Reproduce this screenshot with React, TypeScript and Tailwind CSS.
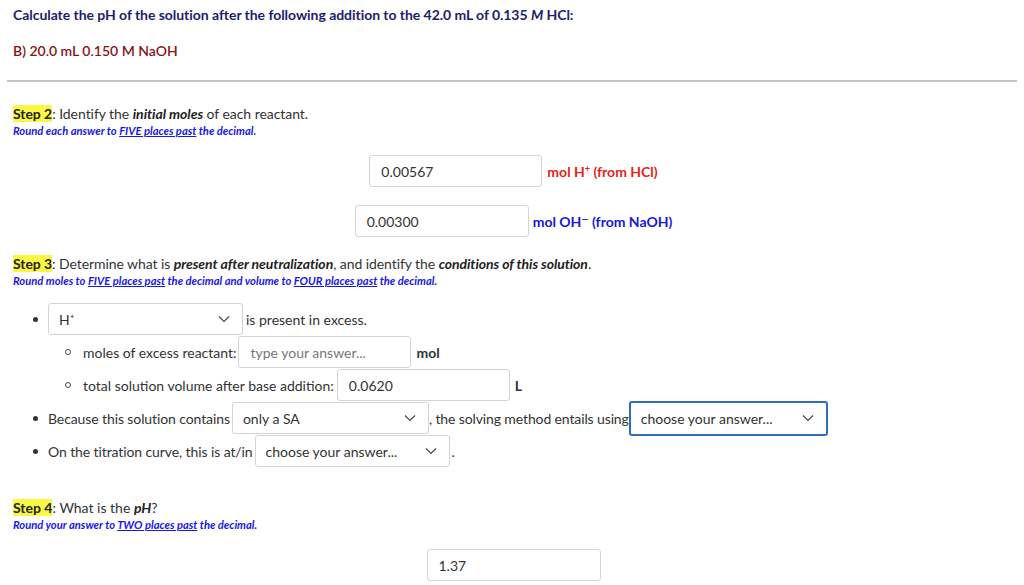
import React from "react";

const Chevron = () => (
  <svg width="12" height="8" viewBox="0 0 12 8" fill="none" className="shrink-0">
    <polyline points="1,1.5 6,6.5 11,1.5" stroke="#444" strokeWidth="1.1" />
  </svg>
);

function Select({ value, width, focused }: { value: string; width: string; focused?: boolean }) {
  return (
    <div
      className={`flex items-center justify-between rounded-[3px] bg-white pl-[10px] pr-[12px] text-[14px] text-[#333] ${width} ${
        focused ? "h-[35px] border-2 border-[#2f6db5]" : "h-[32px] border border-[#d4d4d4]"
      }`}
    >
      <span>{value}</span>
      <Chevron />
    </div>
  );
}

function Field({ value, width, placeholder }: { value?: string; width: string; placeholder?: string }) {
  return (
    <div
      className={`flex h-[32px] shrink-0 items-center rounded-[3px] border border-[#d4d4d4] bg-white px-[11px] text-[14px] ${width}`}
    >
      {value ? <span className="text-[#333]">{value}</span> : <span className="text-[#777]">{placeholder}</span>}
    </div>
  );
}

const Step = ({ n }: { n: number }) => <span className="bg-[#fbf843] font-bold text-[#222]">Step {n}</span>;

const Hint = ({ children }: { children: React.ReactNode }) => (
  <div className="mt-[1px] text-[11.2px] font-bold italic leading-[14px] text-[#1717e8]">{children}</div>
);

const U = ({ children }: { children: React.ReactNode }) => <span className="underline">{children}</span>;

const Dot = () => <span className="mr-[10px] ml-[33px] inline-block h-[5px] w-[5px] shrink-0 rounded-full bg-[#333]" />;
const Ring = () => (
  <span className="mr-[12px] ml-[65px] inline-block h-[6px] w-[6px] shrink-0 rounded-full border border-[#444]" />
);

export default function App() {
  return (
    <div className="min-h-[585px] w-[1024px] bg-white font-['Lato',sans-serif] text-[14px] text-[#333]">
      <div className="px-[13px] pt-[7px]">
        <div className="text-[14px] font-bold leading-[16px] tracking-[-0.05px] text-[#1d1d6f]">
          Calculate the pH of the solution after the following addition to the 42.0 mL of 0.135 <i>M</i> HCl:
        </div>
        <div className="mt-[20px] text-[14px] font-semibold leading-[16px] text-[#861515]">B) 20.0 mL 0.150 M NaOH</div>
      </div>

      <div className="mx-[7px] mt-[21px] h-[2px] bg-[#c4c4c4]" />

      <div className="px-[13px] pt-[23px]">
        <div className="text-[14px] leading-[18px] tracking-[-0.05px]">
          <Step n={2} />: Identify the <b className="italic text-[#222]">initial moles</b> of each reactant.
        </div>
        <Hint>
          Round each answer to <U>FIVE places past</U> the decimal.
        </Hint>

        <div className="mt-[17px] flex items-center justify-center pl-[3px]">
          <Field value="0.00567" width="w-[173px]" />
          <span className="ml-[5px] font-bold text-[#e3231c]">
            mol H<sup className="text-[9px]">+</sup> (from HCl)
          </span>
        </div>
        <div className="mt-[18px] flex items-center justify-center pl-[3px]">
          <Field value="0.00300" width="w-[174px]" />
          <span className="ml-[4px] font-bold text-[#1717d6]">
            mol OH<sup className="text-[9px]">—</sup> (from NaOH)
          </span>
        </div>

        <div className="mt-[18px] text-[14px] leading-[18px] tracking-[-0.07px]">
          <Step n={3} />: Determine what is <b className="italic text-[#222]">present after neutralization</b>, and identify the{" "}
          <b className="italic text-[#222]">conditions of this solution</b>.
        </div>
        <Hint>
          Round moles to <U>FIVE places past</U> the decimal and volume to <U>FOUR places past</U> the decimal.
        </Hint>
      </div>

      <div className="mt-[15px] flex flex-col gap-[1px]">
        <div className="flex h-[32px] items-center">
          <Dot />
          <Select value="H⁺" width="w-[195px]" />
          <span className="ml-[3px]">is present in excess.</span>
        </div>
        <div className="flex h-[32px] items-center">
          <Ring />
          <span className="mr-[2px]">moles of excess reactant:</span>
          <Field placeholder="type your answer..." width="w-[173px]" />
          <span className="ml-[5px] font-bold">mol</span>
        </div>
        <div className="flex h-[32px] items-center">
          <Ring />
          <span className="mr-[3px]">total solution volume after base addition:</span>
          <Field value="0.0620" width="w-[173px]" />
          <span className="ml-[5px] font-bold">L</span>
        </div>
        <div className="flex h-[32px] items-center">
          <Dot />
          <span className="mr-[2px] tracking-[-0.1px]">Because this solution contains</span>
          <Select value="only a SA" width="w-[197px]" />
          <span className="tracking-[-0.12px]">, the solving method entails using</span>
          <Select value="choose your answer..." width="w-[199px]" focused />
        </div>
        <div className="flex h-[32px] items-center">
          <Dot />
          <span className="mr-[2px] tracking-[-0.1px]">On the titration curve, this is at/in</span>
          <Select value="choose your answer..." width="w-[195px]" />
          <span className="ml-[2px]">.</span>
        </div>
      </div>

      <div className="px-[13px] pt-[32px]">
        <div className="text-[14px] leading-[18px]">
          <Step n={4} />: What is the <b className="italic text-[#222]">pH</b>?
        </div>
        <Hint>
          Round your answer to <U>TWO places past</U> the decimal.
        </Hint>
        <div className="mt-[17px] flex justify-center pl-[3px]">
          <Field value="1.37" width="w-[174px]" />
        </div>
      </div>
    </div>
  );
}
